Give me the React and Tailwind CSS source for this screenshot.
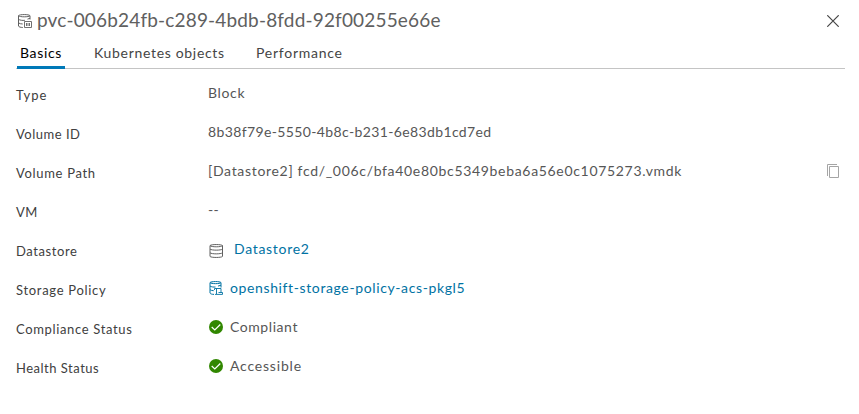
import React from "react";

function VolumeIcon({ className }) {
  return (
    <svg viewBox="0 0 14 14" className={className} fill="none" stroke="currentColor" strokeWidth="1">
      <path d="M.5 1.700v10.400c.5.900 2 1.300 4.300 1.400M12 5.500V1.700" />
      <path d="M.5 1.700C1.500.2 11.100.2 12 1.700C11.100 3.200 1.500 3.200.5 1.700z" />
      <path d="M.5 5.300c1.400 1 4 1.300 6.400 1M.5 8.900c1 .8 2.400 1 4.200 1.100M9.500 5.100l2.500-.8" />
      <path d="M6.500 7.500h7v6h-7zM8.500 9v3M10 9v3M11.500 9v3" strokeWidth=".9" />
    </svg>
  );
}

function DatastoreIcon({ className }) {
  return (
    <svg viewBox="0 0 14 14" className={className} fill="none" stroke="currentColor" strokeWidth="1">
      <path d="M1 1.600v10.800c1 1.400 11.500 1.400 12.500 0V1.600" />
      <path d="M1 1.600C2 .2 12.500.2 13.500 1.600C12.500 3.200 2 3.200 1 1.600z" />
      <path d="M1 5.100c1.500 1.400 11 1.400 12.500 0M1 8.800c1.500 1.400 11 1.400 12.500 0" />
    </svg>
  );
}

function PolicyIcon({ className }) {
  return (
    <svg viewBox="0 0 14 14" className={className} fill="none" stroke="currentColor" strokeWidth="1">
      <path d="M1 1.600v10.500c.6.900 2 1.200 4 1.300M12 6.500V1.600" />
      <path d="M1 1.600C2 .2 11 .2 12 1.600C11 3 2 3 1 1.600z" />
      <path d="M1 5c1.400 1 3.600 1.200 5.500 1M1 8.700c1 .7 2.200.9 3.700 1M9 5.100l3-.9" />
      <path d="M5.500 9V7.500H12v4M7.500 7.500v5.500M6 13.400h7.500v-1.900H9.500" strokeWidth=".9" />
    </svg>
  );
}

function CheckIcon() {
  return (
    <svg viewBox="0 0 14 14" className="size-3.5 shrink-0">
      <circle cx="7" cy="7" r="7" fill="#318700" />
      <path d="M2.700 7l3.100 2.900 5.500-5.400" fill="none" stroke="#fff" strokeWidth="1.200" />
    </svg>
  );
}

function Row({ label, labelClass, children }) {
  return (
    <div className="flex h-[39px]">
      <dt className="w-48 shrink-0 pt-[5px] text-[13px] leading-5 text-[#404040]">
        <span className={labelClass}>{label}</span>
      </dt>
      <dd className="flex h-5 flex-1 items-center pt-[5px] text-sm leading-5 text-[#565656]">{children}</dd>
    </div>
  );
}

export default function App() {
  return (
    <main className="h-[414px] w-[859px] overflow-hidden bg-white font-['Lato',sans-serif] text-[#565656]">
      <header className="flex h-10 items-center pr-5 pl-[18px]">
        <VolumeIcon className="mt-[2px] size-3.5 shrink-0 text-[#606060]" />
        <h1 className="ml-[5px] text-[19px] leading-6 whitespace-nowrap text-[#606060]">
          <span className="tracking-[0.170px]">pvc-006b24fb-c289-4bdb-8fdd-92f00255e66e</span>
        </h1>
        <button className="ml-auto" aria-label="Close">
          <svg viewBox="0 0 12 12" className="mt-[2px] size-3" stroke="#454545" strokeWidth="1.200">
            <path d="M.3.3l11.400 11.400M11.700.3L.3 11.700" />
          </svg>
        </button>
      </header>
      <nav className="mr-[14px] ml-4 flex h-[29px] border-b border-[#c4c4c4] text-sm leading-[26px] whitespace-nowrap text-[#454545]">
        <button className="mr-[29px] ml-px flex h-[29px] w-12 border-b-3 border-[#0079b8] pl-[3px] text-left text-black">
          <span className="tracking-[0.650px]">Basics</span>
        </button>
        <button className="mr-[31px] flex w-[131px] text-left"><span className="tracking-[0.680px]">Kubernetes objects</span></button>
        <button className="flex text-left"><span className="tracking-[0.750px]">Performance</span></button>
      </nav>
      <dl className="pt-[11px] pr-[19px] pl-4 whitespace-nowrap">
        <Row label="Type" labelClass="tracking-[1px]"><span className="tracking-[0.650px]">Block</span></Row>
        <Row label="Volume ID" labelClass="tracking-[0.500px]"><span className="tracking-[0.370px]">8b38f79e-5550-4b8c-b231-6e83db1cd7ed</span></Row>
        <Row label="Volume Path" labelClass="tracking-[0.680px]">
          <span className="tracking-[0.680px]">[Datastore2] fcd/_006c/bfa40e80bc5349beba6a56e0c1075273.vmdk</span>
          <button className="ml-auto" aria-label="Copy">
            <svg viewBox="0 0 14 14" className="size-3.5" fill="none" stroke="#a5a5a5">
              <path d="M1.500 12V.5H11M3.500 2.500h9v11h-9z" />
            </svg>
          </button>
        </Row>
        <Row label="VM" labelClass="tracking-[0.400px]"><span className="tracking-[0.400px]">--</span></Row>
        <Row label="Datastore" labelClass="tracking-[0.600px]">
          <DatastoreIcon className="mt-[4px] mr-[11px] ml-px size-3.5 text-[#606060]" />
          <a className="text-[#0072a3]"><span className="tracking-[0.700px]">Datastore2</span></a>
        </Row>
        <Row label="Storage Policy" labelClass="tracking-[0.700px]">
          <PolicyIcon className="mr-[7px] ml-px size-3.5 text-[#0072a3]" />
          <a className="text-[#0072a3]"><span className="tracking-[0.620px]">openshift-storage-policy-acs-pkgl5</span></a>
        </Row>
        <Row label="Compliance Status" labelClass="tracking-[0.650px]">
          <span className="flex items-center gap-[7px] pl-px"><CheckIcon /><span className="tracking-[0.570px]">Compliant</span></span>
        </Row>
        <Row label="Health Status" labelClass="tracking-[0.500px]">
          <span className="flex items-center gap-[7px] pl-px"><CheckIcon /><span className="tracking-[0.800px]">Accessible</span></span>
        </Row>
      </dl>
    </main>
  );
}
